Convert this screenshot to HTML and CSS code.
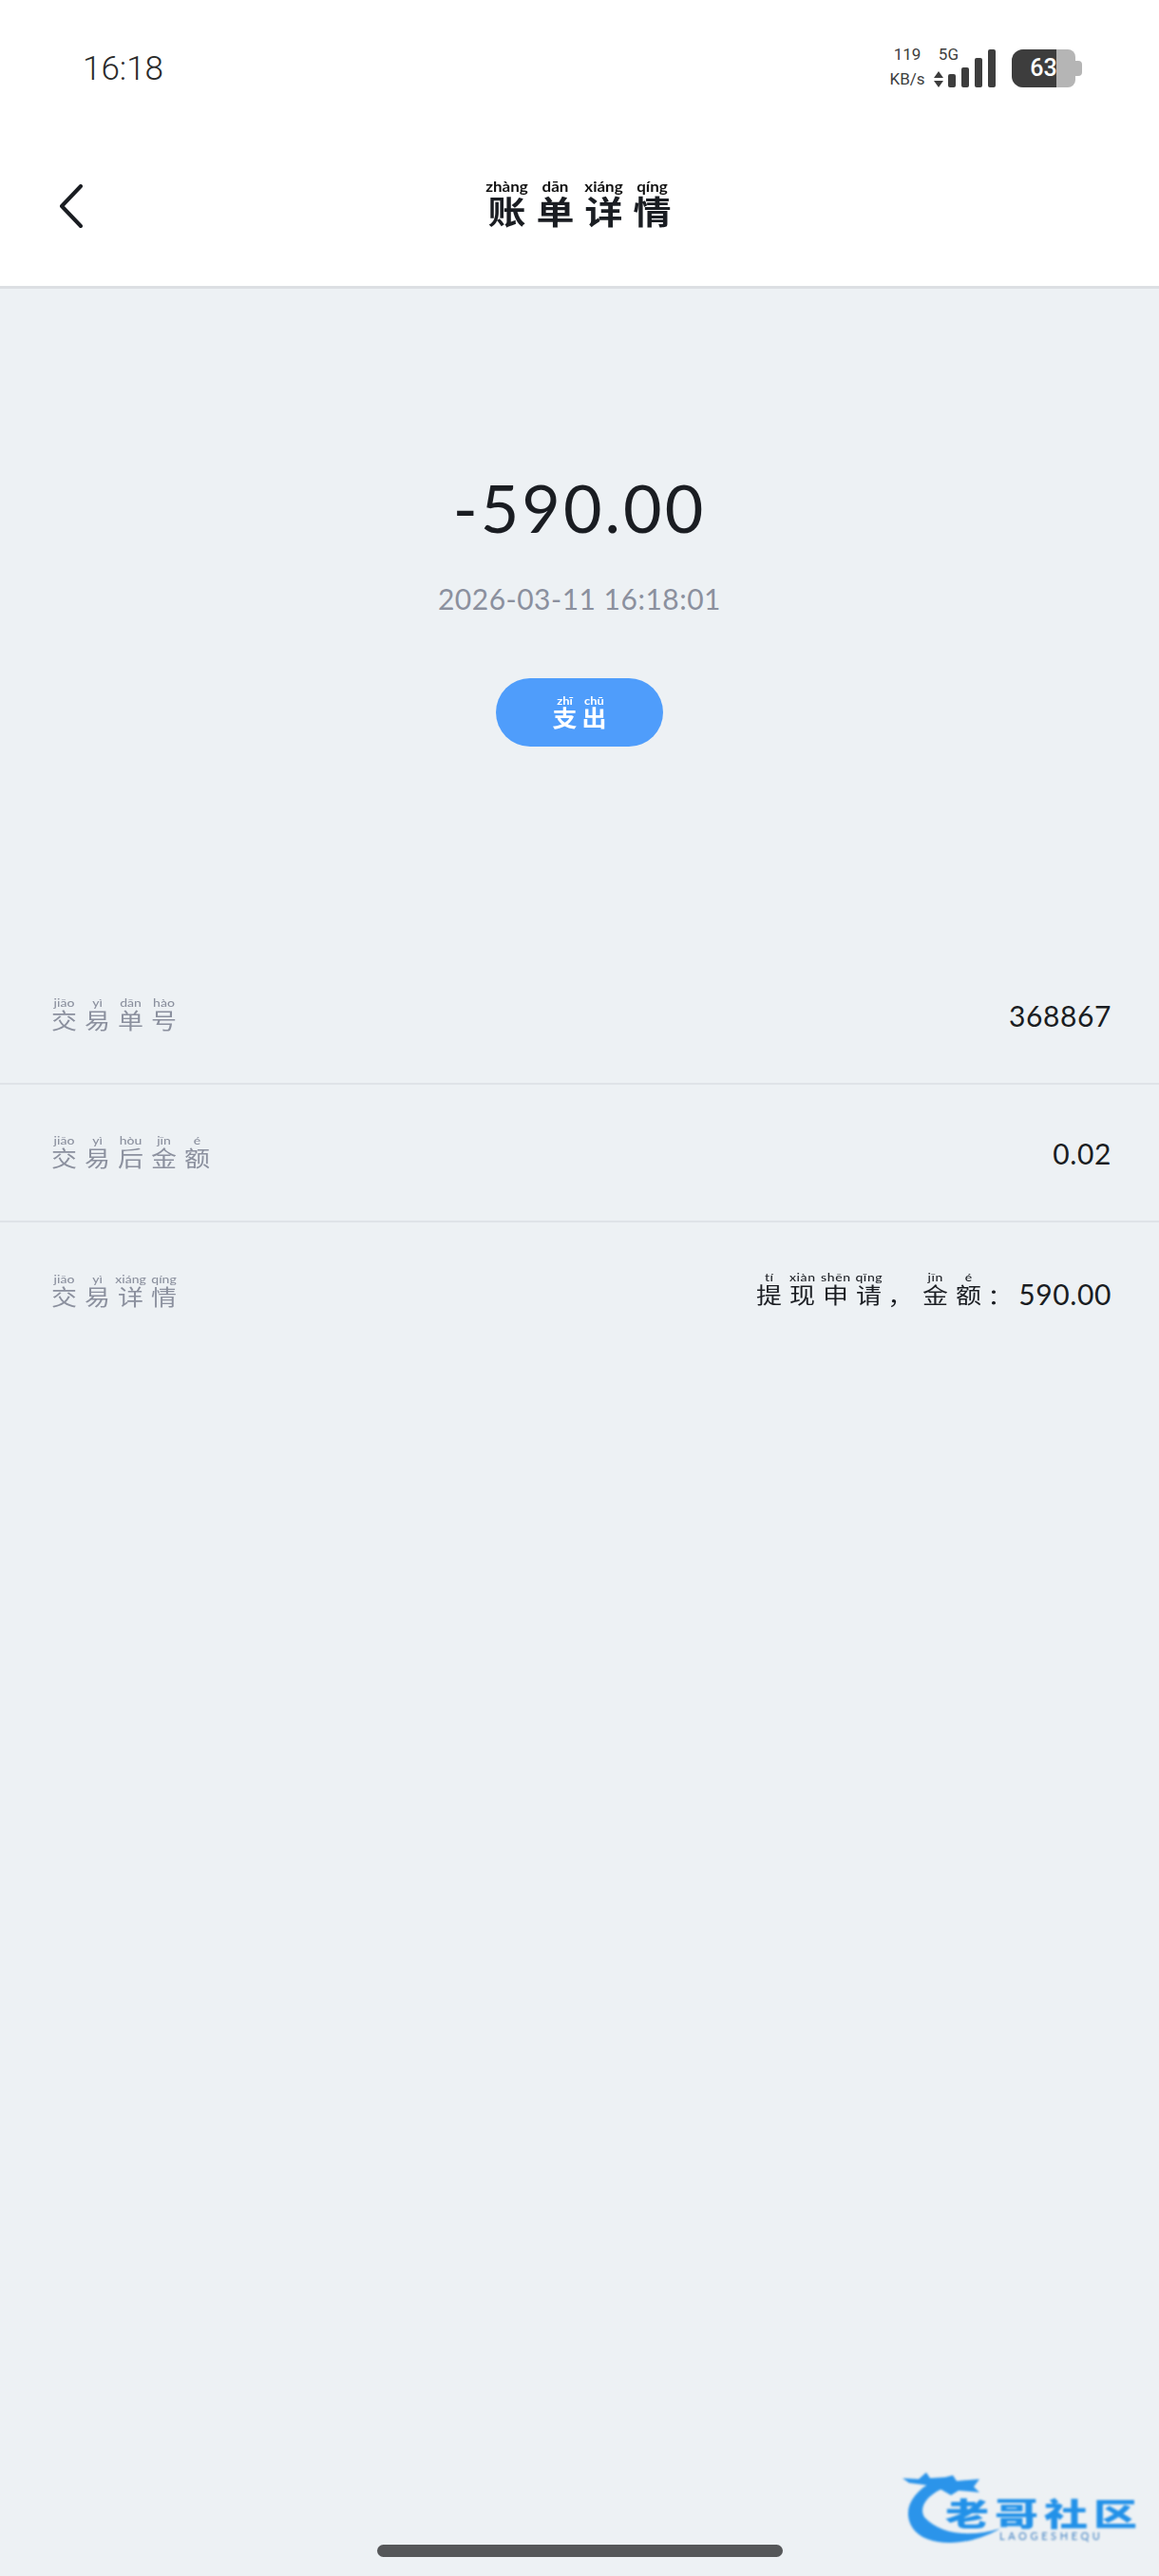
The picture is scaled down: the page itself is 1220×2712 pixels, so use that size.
FILE: index.html
```html
<!DOCTYPE html>
<html lang="zh">
<head>
    <meta charset="UTF-8">
    <meta name="viewport" content="width=device-width, initial-scale=1.0">
    <title>账单详情</title>
    <link rel="stylesheet" href="styles.css">
</head>
<body>
    <div class="page">
        <header class="top">
            <div class="status">
                <span class="time">16:18</span>
                <div class="status-right">
                    <div class="net">
                        <span class="speed">119</span>
                        <span class="five-g">5G</span>
                        <span class="speed">KB/s</span>
                        <svg class="updown" viewBox="0 0 10 17" width="10" height="17">
                            <path d="M5 0 L10 7 L0 7 Z M0 10 L10 10 L5 17 Z" fill="#3d3d3d"/>
                        </svg>
                    </div>
                    <svg class="signal" viewBox="0 0 50 40" width="50" height="40">
                        <rect x="0" y="26" width="8" height="14" rx="2" fill="#3d3d3d"/>
                        <rect x="14" y="19" width="8" height="21" rx="2" fill="#3d3d3d"/>
                        <rect x="28" y="9" width="8" height="31" rx="2" fill="#3d3d3d"/>
                        <rect x="42" y="0" width="8" height="40" rx="2" fill="#3d3d3d"/>
                    </svg>
                    <div class="battery">
                        <div class="battery-body">
                            <div class="battery-level"></div>
                            <span class="battery-num">63</span>
                        </div>
                        <div class="battery-nub"></div>
                    </div>
                </div>
            </div>
            <nav class="nav">
                <svg class="back" viewBox="0 0 25 46" width="25" height="46">
                    <path d="M23 2 L3 23 L23 44" fill="none" stroke="#1a1d22" stroke-width="4" stroke-linecap="round" stroke-linejoin="round"/>
                </svg>
                <h1 class="title">
                    <span class="ch"><ruby>账<rt>zhàng</rt></ruby></span>
                    <span class="ch"><ruby>单<rt>dān</rt></ruby></span>
                    <span class="ch"><ruby>详<rt>xiáng</rt></ruby></span>
                    <span class="ch"><ruby>情<rt>qíng</rt></ruby></span>
                </h1>
                <span></span>
            </nav>
        </header>

        <section class="summary">
            <div class="amount">-590.00</div>
            <div class="date">2026-03-11 16:18:01</div>
            <div class="pill">
                <span class="ch"><ruby>支<rt>zhī</rt></ruby></span>
                <span class="ch"><ruby>出<rt>chū</rt></ruby></span>
            </div>
        </section>

        <section class="rows">
            <div class="row">
                <div class="label">
                    <span class="ch"><ruby>交<rt>jiāo</rt></ruby></span>
                    <span class="ch"><ruby>易<rt>yì</rt></ruby></span>
                    <span class="ch"><ruby>单<rt>dān</rt></ruby></span>
                    <span class="ch"><ruby>号<rt>hào</rt></ruby></span>
                </div>
                <div class="value">368867</div>
            </div>
            <div class="row">
                <div class="label">
                    <span class="ch"><ruby>交<rt>jiāo</rt></ruby></span>
                    <span class="ch"><ruby>易<rt>yì</rt></ruby></span>
                    <span class="ch"><ruby>后<rt>hòu</rt></ruby></span>
                    <span class="ch"><ruby>金<rt>jīn</rt></ruby></span>
                    <span class="ch"><ruby>额<rt>é</rt></ruby></span>
                </div>
                <div class="value">0.02</div>
            </div>
            <div class="row">
                <div class="label">
                    <span class="ch"><ruby>交<rt>jiāo</rt></ruby></span>
                    <span class="ch"><ruby>易<rt>yì</rt></ruby></span>
                    <span class="ch"><ruby>详<rt>xiáng</rt></ruby></span>
                    <span class="ch"><ruby>情<rt>qíng</rt></ruby></span>
                </div>
                <div class="value">
                    <span class="ch"><ruby>提<rt>tí</rt></ruby></span>
                    <span class="ch"><ruby>现<rt>xiàn</rt></ruby></span>
                    <span class="ch"><ruby>申<rt>shēn</rt></ruby></span>
                    <span class="ch"><ruby>请<rt>qǐng</rt></ruby></span>
                    <span class="ch punct">，</span>
                    <span class="ch"><ruby>金<rt>jīn</rt></ruby></span>
                    <span class="ch"><ruby>额<rt>é</rt></ruby></span>
                    <span class="ch punct">：</span>
                    <span class="value-num">590.00</span>
                </div>
            </div>
        </section>

        <div class="home-bar"></div>

        <!-- 水印 -->
        <div class="logo">
            <svg class="logo-mark" viewBox="0 0 120 90" width="120" height="90">
                <path d="M38 12 C14 24 4 44 16 62 C28 80 70 84 108 62 C76 72 44 68 28 50 C22 40 30 26 52 18 Z" fill="#2b94ea"/>
                <path d="M5 9 L22 10 L30 3 L34 9 L50 8 L58 6 L62 12 L86 10 L80 18 L86 24 L64 22 L56 27 L44 20 L28 16 L12 14 Z" fill="#2b94ea"/>
            </svg>
            <div class="logo-name">老哥社区</div>
            <div class="logo-sub">LAOGESHEQU</div>
        </div>
    </div>
</body>
</html>
```

FILE: styles.css
```css
* {
    box-sizing: border-box;
}
body {
    margin: 0;
    background-color: #edf1f4;
    font-family: Lato, "Noto Sans CJK SC", sans-serif;
    color: #1a1d22;
}
.page {
    position: relative;
    display: flex;
    flex-direction: column;
    height: 2712px;
    overflow: hidden;
}
.ch {
    display: block;
    width: 35px;
    text-align: center;
    font-family: "Noto Sans CJK SC", sans-serif;
    font-size: 27px;
    line-height: 18px;
    white-space: nowrap;
    transform: scaleY(0.84);
}
rt {
    font-family: Lato, sans-serif;
    font-size: 14px;
    line-height: 9px;
    font-weight: 500;
}

/* 顶部 */
.top {
    background-color: #fff;
    border-bottom: 3px solid #dcdfe3;
    height: 304px;
}
.status {
    display: flex;
    justify-content: space-between;
    align-items: center;
    height: 140px;
    padding: 0 81px 0 87px;
}
.time {
    font-family: Roboto, sans-serif;
    font-weight: 300;
    font-size: 35px;
    color: #2a2a2a;
    padding-top: 4px;
}
.status-right {
    display: flex;
    align-items: flex-end;
}
.net {
    display: grid;
    grid-template-columns: 36px 36px;
    row-gap: 9px;
    align-items: center;
    font-family: Roboto, sans-serif;
    font-size: 17px;
    line-height: 17px;
    color: #3d3d3d;
}
.speed {
    justify-self: center;
}
.five-g {
    justify-self: end;
}
.updown {
    margin-left: 10px;
}
.signal {
    margin-left: -11px;
}
.battery {
    display: flex;
    align-items: center;
    margin-left: 17px;
}
.battery-body {
    position: relative;
    display: flex;
    align-items: center;
    justify-content: center;
    width: 67px;
    height: 40px;
    background-color: #b5b5b5;
    border-radius: 12px 8px 8px 12px;
    overflow: hidden;
}
.battery-level {
    position: absolute;
    left: 0;
    top: 0;
    bottom: 0;
    width: 47px;
    background-color: #3d3d3d;
}
.battery-num {
    position: relative;
    font-family: Roboto, sans-serif;
    font-weight: 500;
    font-size: 25px;
    color: #fff;
}
.battery-nub {
    width: 7px;
    height: 16px;
    background-color: #b5b5b5;
    border-radius: 0 4px 4px 0;
}
.nav {
    display: grid;
    grid-template-columns: 1fr auto 1fr;
    align-items: center;
    height: 161px;
    padding: 0 62px 8px;
}
.title {
    display: flex;
    margin: 0 0 11px;
    font-weight: 700;
}
.title .ch {
    width: 51px;
    font-size: 40px;
    line-height: 26px;
    font-weight: 700;
    transform: scaleY(0.86);
}
.title rt {
    font-size: 17px;
    line-height: 10px;
    font-weight: 700;
    color: #111;
}

/* 金额 */
.summary {
    display: flex;
    flex-direction: column;
    align-items: center;
    height: 693px;
    padding-top: 190px;
}
.amount {
    font-size: 70px;
    line-height: 80px;
    letter-spacing: 3px;
}
.date {
    margin-top: 38px;
    font-size: 30px;
    line-height: 36px;
    letter-spacing: 0.5px;
    color: #8b909e;
}
.pill {
    display: flex;
    justify-content: center;
    align-items: center;
    width: 176px;
    height: 72px;
    margin-top: 66px;
    background-color: #4f9dfb;
    border-radius: 36px;
    color: #fff;
}
.pill .ch {
    width: 31px;
    margin-bottom: 8px;
    font-size: 26px;
    line-height: 14px;
    font-weight: 700;
    transform: scaleY(0.9);
}
.pill rt {
    font-size: 13px;
    font-weight: 700;
}

/* 列表 */
.row {
    display: flex;
    justify-content: space-between;
    align-items: center;
    height: 145px;
    padding: 0 50px 0 50px;
    border-bottom: 2px solid #dfe3e8;
}
.row:last-child {
    border-bottom: none;
}
.label {
    display: flex;
    margin-bottom: 7px;
    color: #8b909e;
}
.value {
    display: flex;
    align-items: flex-end;
    font-size: 30px;
    line-height: 36px;
    letter-spacing: 0.6px;
}
.value .ch {
    margin-bottom: 11px;
}
.value-num {
    margin-bottom: 4px;
}
.punct {
    text-align: left;
    padding-left: 2px;
}

/* 底部 */
.home-bar {
    align-self: center;
    width: 427px;
    height: 13px;
    margin-top: auto;
    margin-bottom: 20px;
    background-color: #555759;
    border-radius: 7px;
}
.logo {
    position: absolute;
    left: 945px;
    top: 2600px;
    width: 265px;
    height: 90px;
    filter: blur(0.8px);
}
.logo-mark {
    position: absolute;
    left: 0;
    top: 0;
}
.logo-name {
    position: absolute;
    left: 50px;
    top: 16px;
    font-family: "Noto Sans CJK SC", sans-serif;
    font-weight: 900;
    font-size: 46px;
    line-height: 58px;
    letter-spacing: 6px;
    color: #2291e8;
    white-space: nowrap;
    transform: scaleY(0.72);
}
.logo-sub {
    position: absolute;
    left: 107px;
    top: 64px;
    font-size: 11px;
    line-height: 12px;
    letter-spacing: 3.6px;
    color: #3f7fc0;
    white-space: nowrap;
}
```
